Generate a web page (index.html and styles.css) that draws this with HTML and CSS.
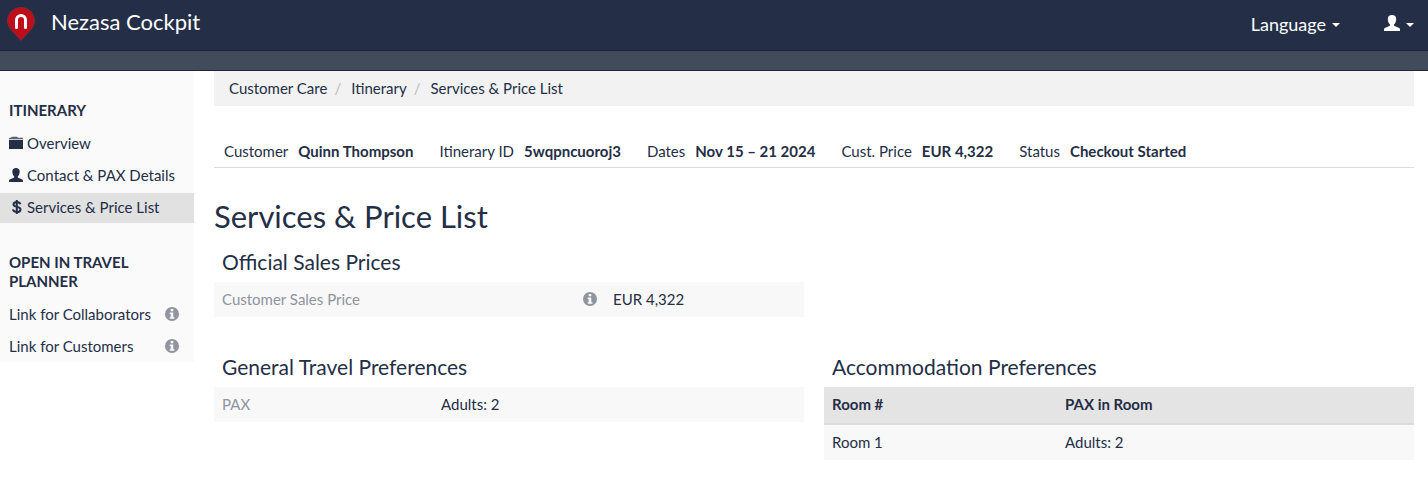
FILE: index.html
```
<!DOCTYPE html>
<html lang="en">
<head>
    <meta charset="UTF-8">
    <meta name="viewport" content="width=device-width, initial-scale=1.0">
    <title>Nezasa Cockpit - Services &amp; Price List</title>
    <link rel="stylesheet" href="styles.css">
</head>
<body>
    <!-- shared icons -->
    <svg class="sprite" aria-hidden="true">
        <symbol id="icon-user" viewBox="0 0 16 16">
            <path d="M8 0C5.300 0 3.800 1.600 3.800 4c0 2.300.9 4.600 2.100 5.600.3.700.2 1.100-.5 1.500L1.400 12.800C.4 13.200 0 13.800 0 14.800V16h16v-1.200c0-1-.4-1.600-1.400-2l-4-1.700c-.7-.4-.8-.8-.5-1.500 1.200-1 2.100-3.300 2.100-5.600C12.200 1.600 10.700 0 8 0z"/>
        </symbol>
        <symbol id="icon-info" viewBox="0 0 14 14">
            <path fill-rule="evenodd" d="M7 0a7 7 0 1 0 0 14A7 7 0 0 0 7 0zM5.700 2h2.600v2.200H5.700zM4.700 5.400h3.600v4.800h1.100v1.500H4.700v-1.500h1V6.900h-1z"/>
        </symbol>
    </svg>

    <header class="header">
        <a href="#" class="brand">
            <svg class="logo" viewBox="0 0 28 34" aria-hidden="true">
                <path fill="#be0e19" stroke="#7d2b3d" stroke-width="1" d="M14 .5C6.500.5.500 6.300.500 13.600c0 3.200 1.200 6 3.100 8.500L14 33.500l10.400-11.400c1.900-2.500 3.100-5.300 3.100-8.500C27.500 6.300 21.500.5 14 .5z"/>
                <path fill="none" stroke="#fff" stroke-width="3" stroke-linecap="round" d="M9.500 20.500V13a4.500 4.500 0 0 1 9 0v7.500"/>
            </svg>
            <span>Nezasa Cockpit</span>
        </a>
        <div class="header-menu">
            <button type="button" class="menu-button">Language <span class="caret"></span></button>
            <button type="button" class="menu-button" aria-label="Account">
                <svg class="icon-account"><use href="#icon-user"/></svg>
                <span class="caret"></span>
            </button>
        </div>
    </header>
    <div class="subheader"></div>

    <div class="container">
        <nav class="sidebar">
            <h2>Itinerary</h2>
            <ul>
                <li><a href="#">
                    <svg class="icon" viewBox="0 0 14 14"><path d="M3 .8h5l1 1h5v1.400H0V1.800h2z" opacity=".75"/><path d="M0 4h14v9H0z"/></svg>
                    Overview</a></li>
                <li><a href="#">
                    <svg class="icon"><use href="#icon-user"/></svg>
                    Contact &amp; PAX Details</a></li>
                <li><a href="#" class="active">
                    <svg class="icon" viewBox="0 0 14 14"><path fill="none" stroke="currentColor" stroke-width="2" d="M11.400 4.200C10.900 2.600 9.700 1.900 7.800 1.900c-2.100 0-3.300 1-3.300 2.500 0 3.400 7 1.500 7 5 0 1.700-1.400 2.600-3.600 2.600S4.300 11.200 3.900 9.400M7.800 0v14"/></svg>
                    Services &amp; Price List</a></li>
            </ul>
            <h2>Open in Travel Planner</h2>
            <ul>
                <li><a href="#">Link for Collaborators <svg class="icon icon-info"><use href="#icon-info"/></svg></a></li>
                <li><a href="#">Link for Customers <svg class="icon icon-info"><use href="#icon-info"/></svg></a></li>
            </ul>
        </nav>

        <main class="main">
            <ol class="breadcrumb">
                <li><a href="#">Customer Care</a></li>
                <li><a href="#">Itinerary</a></li>
                <li><a href="#">Services &amp; Price List</a></li>
            </ol>

            <dl class="summary">
                <div><dt>Customer</dt><dd>Quinn Thompson</dd></div>
                <div><dt>Itinerary ID</dt><dd>5wqpncuoroj3</dd></div>
                <div><dt>Dates</dt><dd>Nov 15 – 21 2024</dd></div>
                <div><dt>Cust. Price</dt><dd>EUR 4,322</dd></div>
                <div><dt>Status</dt><dd>Checkout Started</dd></div>
            </dl>

            <h1>Services &amp; Price List</h1>

            <div class="panels">
                <section class="panel">
                    <h3>Official Sales Prices</h3>
                    <table class="prices">
                        <tr>
                            <th scope="row"><div class="label">Customer Sales Price <svg class="icon icon-info"><use href="#icon-info"/></svg></div></th>
                            <td>EUR 4,322</td>
                        </tr>
                    </table>
                </section>
            </div>

            <div class="panels">
                <section class="panel">
                    <h3>General Travel Preferences</h3>
                    <table class="travel">
                        <tr>
                            <th scope="row">PAX</th>
                            <td>Adults: 2</td>
                        </tr>
                    </table>
                </section>
                <section class="panel">
                    <h3>Accommodation Preferences</h3>
                    <table class="rooms">
                        <thead>
                            <tr>
                                <th scope="col">Room #</th>
                                <th scope="col">PAX in Room</th>
                            </tr>
                        </thead>
                        <tbody>
                            <tr>
                                <td>Room 1</td>
                                <td>Adults: 2</td>
                            </tr>
                        </tbody>
                    </table>
                </section>
            </div>
        </main>
    </div>
</body>
</html>
```
FILE: styles.css
```
* {
    margin: 0;
    padding: 0;
    box-sizing: border-box;
}
body {
    font-family: Lato, 'Open Sans', sans-serif;
    font-size: 15px;
    line-height: 19px;
    color: #242e46;
    background: white;
}
a {
    color: inherit;
    text-decoration: none;
}
ul, ol {
    list-style: none;
}
.sprite {
    display: none;
}

/* Header */
.header {
    display: flex;
    justify-content: space-between;
    height: 51px;
    padding: 0 14px 0 7px;
    background: #242e46;
    border-bottom: 1px solid #1c2637;
    color: white;
}
.brand {
    display: flex;
    align-items: center;
    gap: 16px;
    padding-bottom: 8px;
    font-size: 22px;
}
.logo {
    width: 28px;
    height: 34px;
    margin-top: 6px;
}
.header-menu {
    display: flex;
    gap: 44px;
    padding-bottom: 2px;
}
.menu-button {
    display: flex;
    align-items: center;
    gap: 6px;
    background: none;
    border: none;
    color: inherit;
    font-family: inherit;
    font-size: 18px;
    cursor: pointer;
}
.icon-account {
    width: 16px;
    height: 16px;
    margin-bottom: 2px;
    fill: currentColor;
}
.caret {
    margin-top: 2px;
    border-top: 4px solid currentColor;
    border-left: 4px solid transparent;
    border-right: 4px solid transparent;
}
.subheader {
    height: 20px;
    background: #414b5c;
    border-bottom: 1px solid #1f2440;
}

/* Layout */
.container {
    display: flex;
    align-items: flex-start;
    gap: 20px;
    padding-right: 14px;
}
.main {
    flex: 1;
}

/* Sidebar */
.sidebar {
    width: 194px;
    background: #fafafa;
}
.sidebar h2 {
    padding: 30px 50px 9px 9px;
    font-size: 15px;
    line-height: 19px;
    text-transform: uppercase;
}
.sidebar ul {
    display: flex;
    flex-direction: column;
    gap: 2px;
}
.sidebar a {
    display: flex;
    align-items: center;
    gap: 4px;
    height: 30px;
    padding: 0 15px 1px 9px;
    white-space: nowrap;
}
.sidebar a.active {
    background: #e1e1e1;
}
.icon {
    flex: none;
    width: 14px;
    height: 14px;
    margin-bottom: 2px;
    fill: currentColor;
}
.icon-info {
    margin-left: auto;
    color: #8f949e;
}

/* Breadcrumb */
.breadcrumb {
    display: flex;
    padding: 8px 15px;
    background: #f2f2f2;
}
.breadcrumb li + li::before {
    content: "/";
    padding: 0 10px 0 7px;
    color: #bbb;
}

/* Itinerary summary */
.summary {
    display: flex;
    gap: 26px;
    margin-top: 36px;
    padding: 0 10px 6px;
    border-bottom: 1px solid #ddd;
}
.summary div {
    display: flex;
    gap: 10px;
}
.summary dd {
    font-weight: bold;
}

h1 {
    margin: 28px 0 6px;
    font-size: 31px;
    font-weight: normal;
    line-height: 40px;
}

/* Tables */
.panels {
    display: grid;
    grid-template-columns: 1fr 1fr;
    gap: 20px;
    margin-bottom: 30px;
}
.panel h3 {
    padding: 6px 8px;
    font-size: 21px;
    font-weight: normal;
    line-height: 28px;
}
table {
    width: 100%;
    table-layout: fixed;
    border-collapse: collapse;
}
th, td {
    padding: 8px;
    text-align: left;
    background: #f8f8f8;
}
th[scope="row"] {
    font-weight: normal;
    color: #8f949e;
}
thead th {
    padding-bottom: 9px;
    background: #e4e4e4;
    border-bottom: 2px solid #ddd;
}
.prices th {
    width: 391px;
}
.travel th {
    width: 219px;
}
.rooms th:first-child {
    width: 233px;
}
.label {
    display: flex;
    align-items: center;
}
```
